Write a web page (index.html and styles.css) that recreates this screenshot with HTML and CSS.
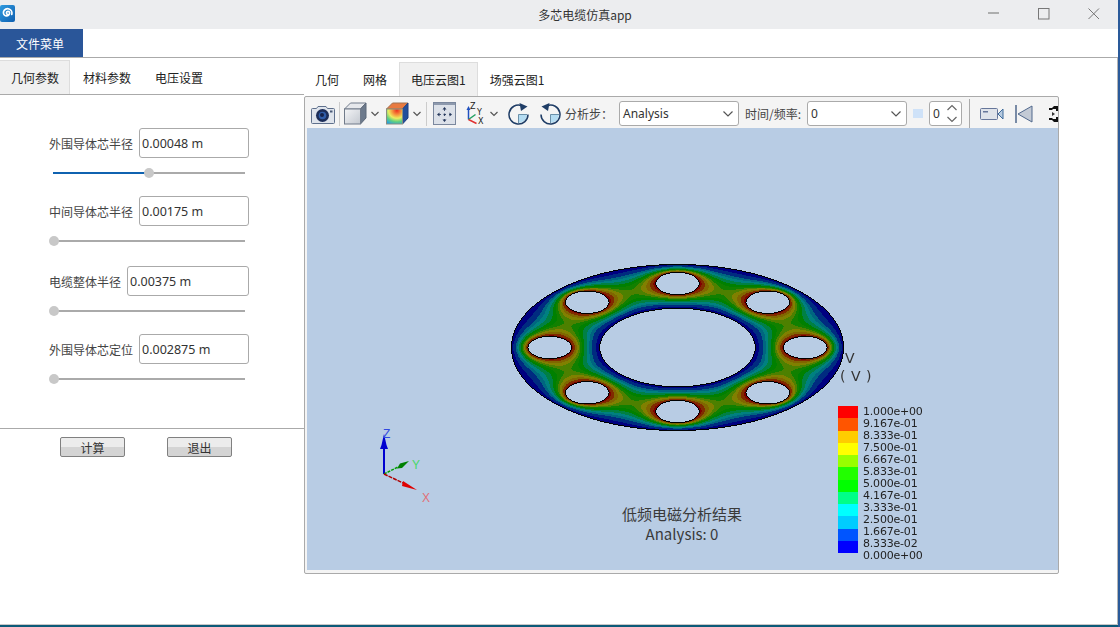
FILE: index.html
```html
<!DOCTYPE html>
<html lang="en">
<head>
    <meta charset="UTF-8">
    <meta name="viewport" content="width=device-width, initial-scale=1.0">
    <title>多芯电缆仿真app</title>
    <link rel="stylesheet" href="styles.css">
</head>
<body>

    <header class="titlebar">
        <svg class="app-logo" viewBox="0 0 15 17">
            <defs>
                <linearGradient id="logoBg" x1="0" y1="0" x2="1" y2="1">
                    <stop offset="0" stop-color="#2f9be0"/>
                    <stop offset="1" stop-color="#0f5fb0"/>
                </linearGradient>
            </defs>
            <rect width="15" height="17" rx="2" fill="url(#logoBg)"/>
            <path d="M8 9.5a1.6 1.6 0 1 1 1.6-1.8c.2 2-1.6 3.6-3.6 3.2C4 10.500 3 8.500 3.600 6.500 4.300 4.300 6.800 3.200 9 4c2.200.8 3.400 3.200 2.800 5.400" fill="none" stroke="#fff" stroke-width="1.700" stroke-linecap="round"/>
        </svg>
        <span class="app-title">多芯电缆仿真app</span>
        <div class="win-controls">
            <svg class="win-btn" viewBox="0 0 12 12"><path d="M0 5h11" stroke="#999" stroke-width="1.500"/></svg>
            <svg class="win-btn" viewBox="0 0 12 12"><rect x=".5" y=".5" width="10.500" height="10.500" fill="none" stroke="#777" stroke-width="1"/></svg>
            <svg class="win-btn" viewBox="0 0 12 12"><path d="M.5.5l10.500 10.500M11 .5L.5 11" stroke="#777" stroke-width="1"/></svg>
        </div>
    </header>

    <nav class="menubar">
        <div class="menu-btn">文件菜单</div>
    </nav>

    <main class="main">
        <section class="left">
            <div class="tabs left-tabs">
                <div class="tab active">几何参数</div>
                <div class="tab">材料参数</div>
                <div class="tab">电压设置</div>
            </div>

            <div class="params">
                <div class="param">
                    <div class="param-row">
                        <label>外围导体芯半径</label>
                        <input class="field" value="0.00048 m">
                    </div>
                    <div class="slider">
                        <div class="slider-fill half"></div>
                        <div class="slider-knob"></div>
                    </div>
                </div>
                <div class="param">
                    <div class="param-row">
                        <label>中间导体芯半径</label>
                        <input class="field" value="0.00175 m">
                    </div>
                    <div class="slider">
                        <div class="slider-knob"></div>
                    </div>
                </div>
                <div class="param">
                    <div class="param-row">
                        <label>电缆整体半径</label>
                        <input class="field wide" value="0.00375 m">
                    </div>
                    <div class="slider">
                        <div class="slider-knob"></div>
                    </div>
                </div>
                <div class="param">
                    <div class="param-row">
                        <label>外围导体芯定位</label>
                        <input class="field" value="0.002875 m">
                    </div>
                    <div class="slider">
                        <div class="slider-knob"></div>
                    </div>
                </div>
            </div>

            <div class="actions">
                <button class="button">计算</button>
                <button class="button">退出</button>
            </div>
        </section>

        <section class="right">
            <div class="tabs right-tabs">
                <div class="tab">几何</div>
                <div class="tab">网格</div>
                <div class="tab active">电压云图1</div>
                <div class="tab">场强云图1</div>
            </div>

            <div class="pane">
                <div class="toolbar">
                    <!-- camera -->
                    <svg class="ico ml4 w24" viewBox="0 0 24 22">
                        <path d="M1.500 5.500h4l1.500-2h8l1.500 2h6a1 1 0 0 1 1 1v13a1 1 0 0 1-1 1h-21a1 1 0 0 1-1-1v-13a1 1 0 0 1 1-1z" fill="#dfe4ec" stroke="#5f708c"/>
                        <circle cx="11.500" cy="12.500" r="6.500" fill="#1c2d58"/>
                        <circle cx="11.500" cy="12.500" r="3.800" fill="#2f5ca8"/>
                        <circle cx="11" cy="12" r="2" fill="#14224a"/>
                        <rect x="19" y="7.500" width="2.500" height="2" fill="#4a5a78"/>
                    </svg>
                    <div class="sep ml4"></div>
                    <!-- cube -->
                    <svg class="ico ml4 w23" viewBox="0 0 23 23">
                        <defs>
                            <linearGradient id="cubeFace" x1="0" y1="0" x2="1" y2="1">
                                <stop offset="0" stop-color="#f4f5f7"/>
                                <stop offset="1" stop-color="#c3c8d0"/>
                            </linearGradient>
                            <radialGradient id="heat" cx=".65" cy=".1" r="1">
                                <stop offset="0" stop-color="#ee3020"/>
                                <stop offset=".3" stop-color="#f59a40"/>
                                <stop offset=".52" stop-color="#ecec60"/>
                                <stop offset=".75" stop-color="#60d080"/>
                                <stop offset="1" stop-color="#28a0e0"/>
                            </radialGradient>
                        </defs>
                        <path d="M.5 7L6.500 1H22L16.500 7z" fill="#e6e8ec" stroke="#717b8a"/>
                        <path d="M16.500 7L22 1v15l-5.500 6z" fill="#6d7a8c" stroke="#5d6878"/>
                        <rect x=".5" y="7" width="16" height="15" fill="url(#cubeFace)" stroke="#717b8a"/>
                    </svg>
                    <svg class="ico ml4 w8" viewBox="0 0 8 6"><path d="M.5 1L4 4.500 7.500 1" fill="none" stroke="#555" stroke-width="1.200"/></svg>
                    <!-- contour cube -->
                    <svg class="ico ml7 w23" viewBox="0 0 23 23">
                        <path d="M.5 7L6.500 1H22L16.500 7z" fill="#e87a40" stroke="#a07050"/>
                        <path d="M16.500 7L22 1v15l-5.500 6z" fill="#234f9c" stroke="#1c3f80"/>
                        <rect x=".5" y="7" width="16" height="15" fill="url(#heat)" stroke="#8a8f80"/>
                    </svg>
                    <svg class="ico ml4 w8" viewBox="0 0 8 6"><path d="M.5 1L4 4.500 7.500 1" fill="none" stroke="#555" stroke-width="1.200"/></svg>
                    <div class="sep ml5"></div>
                    <!-- fit view -->
                    <svg class="ico ml6 w23" viewBox="0 0 23 23">
                        <rect x=".5" y=".5" width="22" height="22" fill="#dce1e9" stroke="#7b889e"/>
                        <rect x="1" y="1" width="21" height="2" fill="#8d99ad"/>
                        <path d="M11.500 5l2 2.500h-4zM11.500 20l2-2.500h-4zM4 12.500l2.500-2v4zM19 12.500l-2.500-2v4z" fill="#26385c"/>
                        <path d="M11.500 7v11M6 12.500h11" stroke="#26385c" stroke-width=".8" stroke-dasharray="2 3"/>
                        <circle cx="11.500" cy="12.500" r="1" fill="#26385c"/>
                    </svg>
                    <!-- axes -->
                    <svg class="ico ml9 w20" viewBox="0 0 20 24">
                        <path d="M3.500 17.500V7" stroke="#2050c0" stroke-width="1.500"/>
                        <path d="M3.500 4l2 4h-4z" fill="#2050c0"/>
                        <path d="M3.500 17.500l7-5" stroke="#20a060" stroke-width="1.500"/>
                        <path d="M3.500 17.500l8 4" stroke="#e03030" stroke-width="1.500"/>
                        <text x="5" y="7" class="axis-mini">Z</text>
                        <text x="12" y="13" class="axis-mini">Y</text>
                        <text x="13" y="22" class="axis-mini">X</text>
                    </svg>
                    <svg class="ico ml5 w8" viewBox="0 0 8 6"><path d="M.5 1L4 4.500 7.500 1" fill="none" stroke="#555" stroke-width="1.200"/></svg>
                    <!-- rotate right -->
                    <svg class="ico ml10 w21" viewBox="0 0 21 22">
                        <path d="M10.500 11.500H19A8.500 8.500 0 0 1 10.500 20z" fill="#b4dcf2"/>
                        <path d="M19 11.500h-8.500V20" fill="none" stroke="#4f7896" stroke-width=".8"/>
                        <path d="M13.500 2.500A9.500 9.500 0 1 0 20 11.500" fill="none" stroke="#1f3d66" stroke-width="1.500"/>
                        <path d="M11.500 0l8 3.500-6.500 4.500z" fill="#1f3d66"/>
                    </svg>
                    <!-- rotate left -->
                    <svg class="ico ml11 w21" viewBox="0 0 21 22">
                        <path d="M10.500 11.500H19A8.500 8.500 0 0 1 10.500 20z" fill="#b4dcf2"/>
                        <path d="M19 11.500h-8.500V20" fill="none" stroke="#4f7896" stroke-width=".8"/>
                        <path d="M7.500 2.500A9.500 9.500 0 1 1 1 11.500" fill="none" stroke="#1f3d66" stroke-width="1.500"/>
                        <path d="M9.500 0l-8 3.500 6.500 4.500z" fill="#1f3d66"/>
                    </svg>
                    <span class="tool-label ml4">分析步：</span>
                    <div class="combo step-combo">
                        <span>Analysis</span>
                        <svg class="chev" viewBox="0 0 10 6"><path d="M.5.5L5 5 9.500.5" fill="none" stroke="#555" stroke-width="1.200"/></svg>
                    </div>
                    <span class="tool-label ml6">时间/频率:</span>
                    <div class="combo time-combo">
                        <span>0</span>
                        <svg class="chev" viewBox="0 0 10 6"><path d="M.5.5L5 5 9.500.5" fill="none" stroke="#555" stroke-width="1.200"/></svg>
                    </div>
                    <div class="swatch"></div>
                    <div class="combo spin">
                        <span>0</span>
                        <svg class="spin-arrows" viewBox="0 0 12 19"><path d="M1.500 6L6 1.500 10.500 6M1.500 13L6 17.500 10.500 13" fill="none" stroke="#666" stroke-width="1.200"/></svg>
                    </div>
                    <div class="sep tall ml7"></div>
                    <!-- video -->
                    <svg class="ico ml10 w24" viewBox="0 0 24 22">
                        <rect x=".5" y="5.500" width="17" height="11" rx="1" fill="#dfe3ea" stroke="#66769a"/>
                        <rect x="3" y="8" width="5" height="1.500" fill="#66769a"/>
                        <path d="M18 11l5-5v10z" fill="#b8cbe0" stroke="#3d6a9c"/>
                    </svg>
                    <!-- step back -->
                    <svg class="ico ml11 w18" viewBox="0 0 18 18">
                        <path d="M1 0v18" stroke="#51688c" stroke-width="1.500"/>
                        <path d="M3 9L17 1v16z" fill="#c3cad5" stroke="#51688c"/>
                    </svg>
                    <!-- cut off by the pane edge -->
                    <svg class="ico ml16 w12" viewBox="0 0 12 16">
                        <path d="M0 2h3l2-2h5v5H7V3H4L3 4H0zM0 12h3l1 1h3v-2h3v5H5l-2-2H0z" fill="#111"/>
                        <path d="M3 6l3 2-3 2z" fill="#333"/>
                    </svg>
                </div>

                <div class="viewport">
                    <canvas id="plot" class="plot" width="350" height="180"></canvas>

                    <div class="unit">
                        <span class="unit-name">V</span>
                        <span>( V )</span>
                    </div>

                    <div class="legend">
                        <div class="legend-bar">
                            <i class="c12"></i><i class="c11"></i><i class="c10"></i><i class="c9"></i>
                            <i class="c8"></i><i class="c7"></i><i class="c6"></i><i class="c5"></i>
                            <i class="c4"></i><i class="c3"></i><i class="c2"></i><i class="c1"></i>
                        </div>
                        <div class="legend-labels">
                            <span>1.000e+00</span>
                            <span>9.167e-01</span>
                            <span>8.333e-01</span>
                            <span>7.500e-01</span>
                            <span>6.667e-01</span>
                            <span>5.833e-01</span>
                            <span>5.000e-01</span>
                            <span>4.167e-01</span>
                            <span>3.333e-01</span>
                            <span>2.500e-01</span>
                            <span>1.667e-01</span>
                            <span>8.333e-02</span>
                            <span>0.000e+00</span>
                        </div>
                    </div>

                    <div class="result-title">
                        <div>低频电磁分析结果</div>
                        <div>Analysis: 0</div>
                    </div>

                    <svg class="triad" viewBox="0 0 70 90">
                        <path d="M9 50V18" stroke="#0000d0" stroke-width="2"/>
                        <path d="M9 10l2.500 11 1.500 4H5l1.500-4z" fill="#0000d0"/>
                        <path d="M9 50l14-7" stroke="#00a000" stroke-width="1.500" stroke-dasharray="3 1"/>
                        <path d="M34 37l-7 7-5 .5 3-5z" fill="#008000"/>
                        <path d="M9 50l19 9" stroke="#b00000" stroke-width="1.500" stroke-dasharray="4 1"/>
                        <path d="M42 66l-15-4 1-5z" fill="#e00000"/>
                        <text x="8" y="14" class="axis-z">Z</text>
                        <text x="37" y="45" class="axis-y">Y</text>
                        <text x="47" y="78" class="axis-x">X</text>
                    </svg>
                </div>
            </div>
        </section>
    </main>

    <div class="taskbar-edge"></div>

    <script src="app.js"></script>
</body>
</html>
```

FILE: styles.css
```css
* {
    box-sizing: border-box;
}
body {
    font-family: "Noto Sans CJK SC", "Noto Sans", sans-serif;
    font-size: 12px;
    color: #222;
    margin: 0;
    padding: 0;
    width: 1120px;
    height: 627px;
    overflow: hidden;
    background-color: #fff;
    border-right: 2px solid #2a5a9a;
    display: flex;
    flex-direction: column;
}

/* title bar */
.titlebar {
    height: 29px;
    background-color: #ecedef;
    position: relative;
    display: flex;
    align-items: center;
    justify-content: center;
    flex-shrink: 0;
}
.app-logo {
    position: absolute;
    left: 0;
    top: 5px;
    width: 15px;
    height: 17px;
}
.app-title {
    margin-left: 52px;
    color: #333;
}
.win-controls {
    position: absolute;
    top: 8px;
    left: 988px;
    display: flex;
    gap: 38px;
}
.win-btn {
    width: 12px;
    height: 12px;
}

.menubar {
    height: 29px;
    border-bottom: 1px solid #aaa;
    flex-shrink: 0;
}
.menu-btn {
    width: 83px;
    height: 28px;
    background-color: #2a5699;
    color: #fff;
    display: flex;
    align-items: center;
    justify-content: center;
    padding-right: 3px;
}

.main {
    flex: 1;
    display: flex;
    min-height: 0;
    border-right: 1px solid #b4b4b4;
}

/* tabs */
.tabs {
    display: flex;
}
.tab {
    display: flex;
    align-items: center;
    border: 1px solid transparent;
    border-bottom: none;
}
.tab.active {
    background-color: #f0f0f0;
    border-color: #ddd;
}
.left-tabs {
    height: 37px;
    padding-top: 2px;
    border-bottom: 1px solid #aaa;
}
.left-tabs .tab {
    padding: 0 10px 0 12px;
}
.left-tabs .tab.active {
    padding: 0 10px 0 11px;
    border-left: none;
}
.right-tabs {
    height: 38px;
    padding-top: 4px;
    margin-left: -1px;
}
.right-tabs .tab {
    padding: 0 11px 1px;
}

/* left panel */
.left {
    width: 304px;
    flex-shrink: 0;
}
.params {
    height: 334px;
    padding-top: 33px;
    border-bottom: 1px solid #aaa;
}
.param-row {
    display: flex;
    justify-content: flex-end;
    align-items: center;
    gap: 6px;
    height: 30px;
    padding-right: 55px;
}
.param-row label {
    color: #444;
}
.field {
    width: 110px;
    height: 30px;
    border: 1px solid #aaa;
    border-radius: 3px;
    padding: 0 2px;
    font-family: "Noto Sans", sans-serif;
    font-size: 12.500px;
    color: #333;
    background: #fff;
    outline: none;
}
.field.wide {
    width: 122px;
}
.slider {
    position: relative;
    height: 2px;
    margin: 14px 59px 22px 53px;
    background-color: #aaa;
}
.param:nth-child(2) .slider {
    margin-bottom: 24px;
}
.slider-fill.half {
    width: 96px;
    height: 2px;
    background-color: #0f62b0;
}
.slider-knob {
    position: absolute;
    top: -4px;
    left: -4px;
    width: 10px;
    height: 10px;
    border-radius: 50%;
    background-color: #c8c8c8;
}
.slider-fill.half + .slider-knob {
    left: 91px;
}
.actions {
    display: flex;
    gap: 42px;
    padding: 8px 0 0 60px;
}
.button {
    width: 65px;
    height: 20px;
    padding: 0;
    font-family: inherit;
    font-size: 12px;
    color: #333;
    border: 1px solid #808080;
    border-radius: 2px;
    background: linear-gradient(#ececec 50%, #d4d4d4 50%);
}

/* right panel */
.right {
    flex: 1;
    min-width: 0;
}
.pane {
    width: 755px;
    height: 478px;
    border: 1px solid #aaa;
    border-radius: 2px;
    background-color: #f4f4f4;
    padding-left: 2px;
    padding-bottom: 3px;
    display: flex;
    flex-direction: column;
    overflow: hidden;
}
.toolbar {
    height: 31px;
    padding-top: 2px;
    flex-shrink: 0;
    display: flex;
    align-items: center;
    white-space: nowrap;
}
.ico {
    flex-shrink: 0;
    display: block;
}
.w8 { width: 8px; height: 6px; }
.w12 { width: 12px; height: 16px; }
.w18 { width: 18px; height: 18px; }
.w20 { width: 20px; height: 24px; }
.w21 { width: 21px; height: 22px; }
.w23 { width: 23px; height: 23px; }
.w24 { width: 24px; height: 22px; }
.ml4 { margin-left: 4px; }
.ml5 { margin-left: 5px; }
.ml6 { margin-left: 6px; }
.ml7 { margin-left: 7px; }
.ml9 { margin-left: 9px; }
.ml10 { margin-left: 10px; }
.ml11 { margin-left: 11px; }
.ml16 { margin-left: 16px; }
.sep {
    width: 1px;
    height: 24px;
    background-color: #ccc;
    flex-shrink: 0;
}
.sep.tall {
    height: 29px;
    background-color: #aaa;
}
.axis-mini {
    font: 8px "DejaVu Sans", sans-serif;
    fill: #222;
}
.tool-label {
    width: 42px;
    color: #444;
    flex-shrink: 0;
}
.tool-label.ml6 {
    width: 56px;
}
.combo {
    height: 25px;
    border: 1px solid #aaa;
    border-radius: 3px;
    background-color: #fff;
    display: flex;
    align-items: center;
    justify-content: space-between;
    padding: 0 5px 0 3px;
    font-family: "Noto Sans", sans-serif;
    color: #333;
    flex-shrink: 0;
}
.step-combo {
    width: 120px;
    margin-left: 12px;
}
.time-combo {
    width: 100px;
    margin-left: 6px;
}
.chev {
    width: 10px;
    height: 6px;
}
.swatch {
    width: 10px;
    height: 9px;
    margin-left: 6px;
    background-color: #cfe2f8;
    flex-shrink: 0;
}
.spin {
    width: 33px;
    margin-left: 6px;
    padding-right: 3px;
}
.spin-arrows {
    width: 12px;
    height: 19px;
}

/* 3d view, everything on it sits at its place on the picture */
.viewport {
    flex: 1;
    position: relative;
    background-color: #b8cce4;
    color: #333;
}
.plot {
    position: absolute;
    left: 196px;
    top: 130px;
}
.unit {
    position: absolute;
    left: 533px;
    top: 221px;
    display: flex;
    flex-direction: column;
    font-family: "DejaVu Sans", sans-serif;
    font-size: 14px;
    line-height: 18px;
    letter-spacing: .5px;
}
.unit-name {
    margin-left: 5px;
}
.legend {
    position: absolute;
    left: 531px;
    top: 278px;
    display: flex;
    gap: 5px;
}
.legend-bar {
    width: 20px;
    height: 147px;
    display: flex;
    flex-direction: column;
}
.legend-bar i {
    display: block;
    flex: 1;
}
.c1 { background-color: #0000ff; }
.c2 { background-color: #0055ff; }
.c3 { background-color: #00ccff; }
.c4 { background-color: #00ffff; }
.c5 { background-color: #00ff88; }
.c6 { background-color: #00ff00; }
.c7 { background-color: #22ff00; }
.c8 { background-color: #99ff00; }
.c9 { background-color: #ffff00; }
.c10 { background-color: #ffcc00; }
.c11 { background-color: #ff5500; }
.c12 { background-color: #ff0000; }
.legend-labels {
    display: flex;
    flex-direction: column;
    font-family: "DejaVu Sans", sans-serif;
    font-size: 11px;
    line-height: 12px;
    letter-spacing: -0.2px;
    color: #222;
}
.result-title {
    position: absolute;
    left: 295px;
    top: 376px;
    width: 160px;
    text-align: center;
    font-size: 15px;
    line-height: 20px;
    color: #3a3a3a;
}
.triad {
    position: absolute;
    left: 68px;
    top: 296px;
    width: 70px;
    height: 90px;
}
.axis-z { font: 12px "Liberation Sans", sans-serif; fill: #3048e0; }
.axis-y { font: 12px "Liberation Sans", sans-serif; fill: #48d868; }
.axis-x { font: 12px "Liberation Sans", sans-serif; fill: #e07078; }

.taskbar-edge {
    height: 3px;
    margin-right: -2px;
    background-color: #0c5a78;
    border-top: 1px solid #c8c8c8;
    flex-shrink: 0;
}
```

FILE: app.js
```js
// Solve the potential on the cable section, then paint it in flat contour bands.
// Outer edge and centre hole are at 0, the eight small conductors at 1.
const N = 201;
const R_INNER = 0.464;
const R_HOLE = 0.128;
const R_RING = 0.767;

const holes = [];
for (let i = 0; i < 8; i++) {
    const a = i * Math.PI / 4;
    holes.push([R_RING * Math.cos(a), R_RING * Math.sin(a)]);
}

// 0 = free node, 1 = fixed at 0, 2 = fixed at 1
function region(u, v) {
    const r = Math.hypot(u, v);
    if (r >= 1 || r <= R_INNER) return 1;
    for (const h of holes) {
        if (Math.hypot(u - h[0], v - h[1]) <= R_HOLE) return 2;
    }
    return 0;
}

const kind = new Uint8Array(N * N);
const phi = new Float64Array(N * N);
for (let j = 0; j < N; j++) {
    for (let i = 0; i < N; i++) {
        const k = region(i / (N - 1) * 2.1 - 1.05, j / (N - 1) * 2.1 - 1.05);
        kind[j * N + i] = k;
        phi[j * N + i] = k === 2 ? 1 : (k === 0 ? 0.5 : 0);
    }
}
for (let it = 0; it < 400; it++) {
    for (let j = 1; j < N - 1; j++) {
        for (let i = 1; i < N - 1; i++) {
            const p = j * N + i;
            if (kind[p] !== 0) continue;
            const avg = (phi[p - 1] + phi[p + 1] + phi[p - N] + phi[p + N]) / 4;
            phi[p] += 1.9 * (avg - phi[p]);
        }
    }
}

function sample(u, v) {
    const x = (u + 1.05) / 2.1 * (N - 1);
    const y = (v + 1.05) / 2.1 * (N - 1);
    const i = Math.floor(x), j = Math.floor(y);
    const fx = x - i, fy = y - j;
    return phi[j * N + i] * (1 - fx) * (1 - fy) + phi[j * N + i + 1] * fx * (1 - fy)
        + phi[(j + 1) * N + i] * (1 - fx) * fy + phi[(j + 1) * N + i + 1] * fx * fy;
}

// stretch the raw solution so the bands get the widths the plot has:
// wide blue at the edges, broad green in the middle, a thick red rim on the conductors
const CURVE = [[0, 0], [0.25, 0.14], [0.55, 0.46], [0.7, 0.68], [0.85, 0.86], [1, 1]];
function remap(s) {
    for (let i = 1; i < CURVE.length; i++) {
        const a = CURVE[i - 1], b = CURVE[i];
        if (s <= b[0]) return a[1] + (s - a[0]) * (b[1] - a[1]) / (b[0] - a[0]);
    }
    return 1;
}

// legend colours, shaded to half
const bands = [
    [0, 0, 128], [0, 43, 128], [0, 102, 128], [0, 128, 128],
    [0, 128, 68], [0, 128, 0], [17, 128, 0], [77, 128, 0],
    [128, 128, 0], [128, 102, 0], [128, 43, 0], [128, 0, 0]
];

const canvas = document.getElementById("plot");
const ctx = canvas.getContext("2d");
const img = ctx.createImageData(canvas.width, canvas.height);
const CX = 174, CY = 89, RX = 166.5, RY = 83.5;

for (let y = 0; y < canvas.height; y++) {
    for (let x = 0; x < canvas.width; x++) {
        const u = (x - CX) / RX, v = (y - CY) / RY;
        if (region(u, v) !== 0) continue;
        const p = (y * canvas.width + x) * 4;
        const edge = region((x - 1 - CX) / RX, v) !== 0 || region((x + 1 - CX) / RX, v) !== 0
            || region(u, (y - 1 - CY) / RY) !== 0 || region(u, (y + 1 - CY) / RY) !== 0;
        const c = edge ? [0, 0, 0] : bands[Math.min(11, Math.max(0, Math.floor(remap(sample(u, v)) * 12)))];
        img.data[p] = c[0];
        img.data[p + 1] = c[1];
        img.data[p + 2] = c[2];
        img.data[p + 3] = 255;
    }
}
ctx.putImageData(img, 0, 0);
```
